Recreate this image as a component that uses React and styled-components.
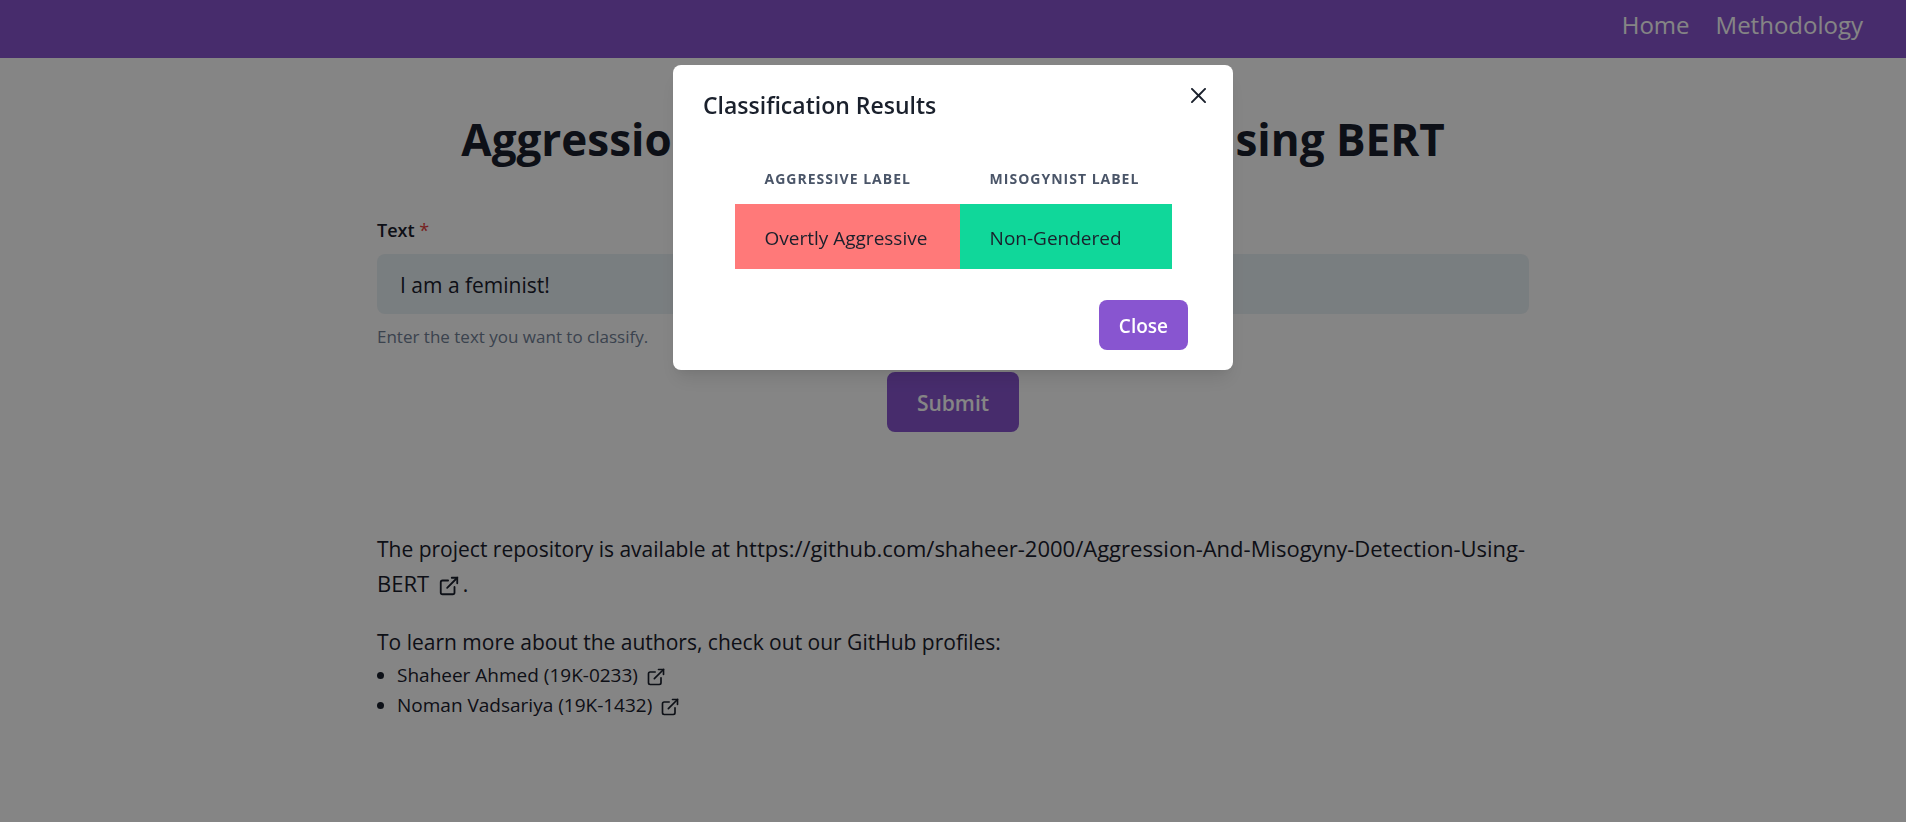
import React from "react";
import styled, { createGlobalStyle } from "styled-components";

const GlobalStyle = createGlobalStyle`
  *, *::before, *::after { box-sizing: border-box; }
  body {
    margin: 0;
    background: #ffffff;
    color: #1a202c;
    font-family: "Segoe UI", "Open Sans", "Noto Sans", sans-serif;
    font-size: 19px;
    line-height: 30px;
  }
  h1, h2, p, ul { margin: 0; }
  a { color: inherit; text-decoration: none; }
  button, input { font-family: inherit; color: inherit; border: 0; }
`;

const NavBar = styled.nav`
  display: flex;
  justify-content: flex-end;
  gap: 26px;
  height: 58px;
  padding: 6px 43px 0;
  background: #8855d0;
`;

const NavLink = styled.a`
  color: #ffffff;
  font-size: 24px;
  line-height: 38px;
`;

const Main = styled.main`
  width: 100%;
  max-width: 1232px;
  margin: 0 auto;
  padding: 49px 40px;
`;

const Title = styled.h1`
  font-size: 44px;
  line-height: 64px;
  font-weight: 700;
  text-align: center;
`;

const Form = styled.form`
  display: flex;
  flex-direction: column;
  padding-top: 44px;
`;

const Label = styled.label`
  font-size: 18px;
  line-height: 30px;
  font-weight: 600;
`;

const Required = styled.span`
  color: #e53e3e;
  font-weight: 400;
`;

const TextField = styled.input`
  height: 60px;
  margin-top: 9px;
  padding: 2px 23px 0;
  border-radius: 8px;
  background: #e9f1f5;
  font-size: 21px;
`;

const HelperText = styled.p`
  margin-top: 10px;
  color: #718096;
  font-size: 17px;
  line-height: 26px;
`;

const SolidButton = styled.button`
  height: ${(p) => (p.$large ? 60 : 50)}px;
  padding: 2px ${(p) => (p.$large ? 30 : 20)}px 0;
  border-radius: 8px;
  background: #8855d0;
  color: #ffffff;
  font-size: ${(p) => (p.$large ? 21 : 19)}px;
  font-weight: 600;
`;

const SubmitRow = styled.div`
  display: flex;
  justify-content: center;
  padding-top: 22px;
`;

const About = styled.section`
  padding-top: 99px;
`;

const Paragraph = styled.p`
  margin-top: ${(p) => (p.$spaced ? 24 : 0)}px;
  font-size: 21px;
  line-height: 34px;
`;

const RepositoryLink = styled.a`
  font-size: 22px;
`;

const AuthorList = styled.ul`
  padding: 1px 0 0 20px;
`;

const LinkIconSvg = styled.svg`
  display: inline-block;
  width: ${(p) => p.$size}px;
  height: ${(p) => p.$size}px;
  margin: 0 3px;
  vertical-align: middle;
`;

const Backdrop = styled.div`
  position: fixed;
  inset: 0;
  display: flex;
  justify-content: center;
  align-items: flex-start;
  padding: 65px 20px;
  background: rgba(0, 0, 0, 0.48);
`;

const Dialog = styled.section`
  position: relative;
  width: 100%;
  max-width: 560px;
  border-radius: 8px;
  background: #ffffff;
  box-shadow: 0 12px 19px -4px rgba(0, 0, 0, 0.1), 0 5px 8px -3px rgba(0, 0, 0, 0.05);
`;

const DialogTitle = styled.h2`
  padding: 21px 30px 19px;
  font-size: 23px;
  line-height: 38px;
  font-weight: 600;
`;

const IconButton = styled.button`
  position: absolute;
  top: 10px;
  right: 15px;
  display: flex;
  align-items: center;
  justify-content: center;
  width: 40px;
  height: 40px;
  padding: 0;
  background: transparent;
`;

const DialogBody = styled.div`
  display: flex;
  justify-content: center;
  padding: 10px 30px;
`;

const ResultTable = styled.table`
  width: 437px;
  border-collapse: collapse;
`;

const HeadCell = styled.th`
  padding: 15px 30px;
  color: #4a5568;
  font-size: 14px;
  line-height: 21px;
  font-weight: 700;
  letter-spacing: 1px;
  text-align: left;
  text-transform: uppercase;
`;

const ResultCell = styled.td`
  height: 65px;
  padding: 22px 30px 18px;
  background: ${(p) => p.$fill};
  line-height: 25px;
`;

const DialogFooter = styled.footer`
  display: flex;
  justify-content: flex-end;
  padding: 21px 45px 20px;
`;

function ExternalLinkIcon({ size }) {
  return (
    <LinkIconSvg $size={size} viewBox="0 0 24 24" aria-hidden="true">
      <g fill="none" stroke="currentColor" strokeLinecap="round" strokeWidth="2">
        <path d="M15 3h6v6" />
        <path d="M10 14L21 3" />
        <path d="M18 13v6a2 2 0 01-2 2H5a2 2 0 01-2-2V8a2 2 0 012-2h6" />
      </g>
    </LinkIconSvg>
  );
}

function CloseIcon() {
  return (
    <svg width="15" height="15" viewBox="0 0 24 24" aria-hidden="true">
      <path
        fill="currentColor"
        d="M.439,21.44a1.5,1.5,0,0,0,2.122,2.121L11.823,14.3a.25.25,0,0,1,.354,0l9.262,9.263a1.5,1.5,0,1,0,2.122-2.121L14.3,12.177a.25.25,0,0,1,0-.354l9.263-9.262A1.5,1.5,0,0,0,21.439.44L12.177,9.7a.25.25,0,0,1-.354,0L2.561.44A1.5,1.5,0,0,0,.439,2.561L9.7,11.823a.25.25,0,0,1,0,.354Z"
      />
    </svg>
  );
}

const authors = [
  { name: "Shaheer Ahmed (19K-0233)", href: "https://github.com/shaheer-2000" },
  { name: "Noman Vadsariya (19K-1432)", href: "https://github.com/" },
];

const repository =
  "https://github.com/shaheer-2000/Aggression-And-Misogyny-Detection-Using-BERT";

export default function App() {
  return (
    <>
      <GlobalStyle />
      <NavBar>
        <NavLink href="#home">Home</NavLink>
        <NavLink href="#methodology">Methodology</NavLink>
      </NavBar>
      <Main>
        <Title>Aggression & Misogyny Detection Using BERT</Title>
        <Form onSubmit={(e) => e.preventDefault()}>
          <Label htmlFor="text">
            Text <Required>*</Required>
          </Label>
          <TextField id="text" type="text" defaultValue="I am a feminist!" required />
          <HelperText>Enter the text you want to classify.</HelperText>
          <SubmitRow>
            <SolidButton type="submit" $large>
              Submit
            </SolidButton>
          </SubmitRow>
        </Form>
        <About>
          <Paragraph>
            The project repository is available at{" "}
            <RepositoryLink href={repository}>
              {repository} <ExternalLinkIcon size={22} />
            </RepositoryLink>
            .
          </Paragraph>
          <Paragraph $spaced>
            To learn more about the authors, check out our GitHub profiles:
          </Paragraph>
          <AuthorList>
            {authors.map((author) => (
              <li key={author.name}>
                <a href={author.href}>
                  {author.name} <ExternalLinkIcon size={20} />
                </a>
              </li>
            ))}
          </AuthorList>
        </About>
      </Main>
      <Backdrop>
        <Dialog role="dialog" aria-modal="true" aria-labelledby="results-title">
          <DialogTitle id="results-title">Classification Results</DialogTitle>
          <IconButton type="button" aria-label="Close dialog">
            <CloseIcon />
          </IconButton>
          <DialogBody>
            <ResultTable>
              <thead>
                <tr>
                  <HeadCell scope="col">Aggressive Label</HeadCell>
                  <HeadCell scope="col">Misogynist Label</HeadCell>
                </tr>
              </thead>
              <tbody>
                <tr>
                  <ResultCell $fill="#ff7979">Overtly Aggressive</ResultCell>
                  <ResultCell $fill="#10d79a">Non-Gendered</ResultCell>
                </tr>
              </tbody>
            </ResultTable>
          </DialogBody>
          <DialogFooter>
            <SolidButton type="button">Close</SolidButton>
          </DialogFooter>
        </Dialog>
      </Backdrop>
    </>
  );
}
